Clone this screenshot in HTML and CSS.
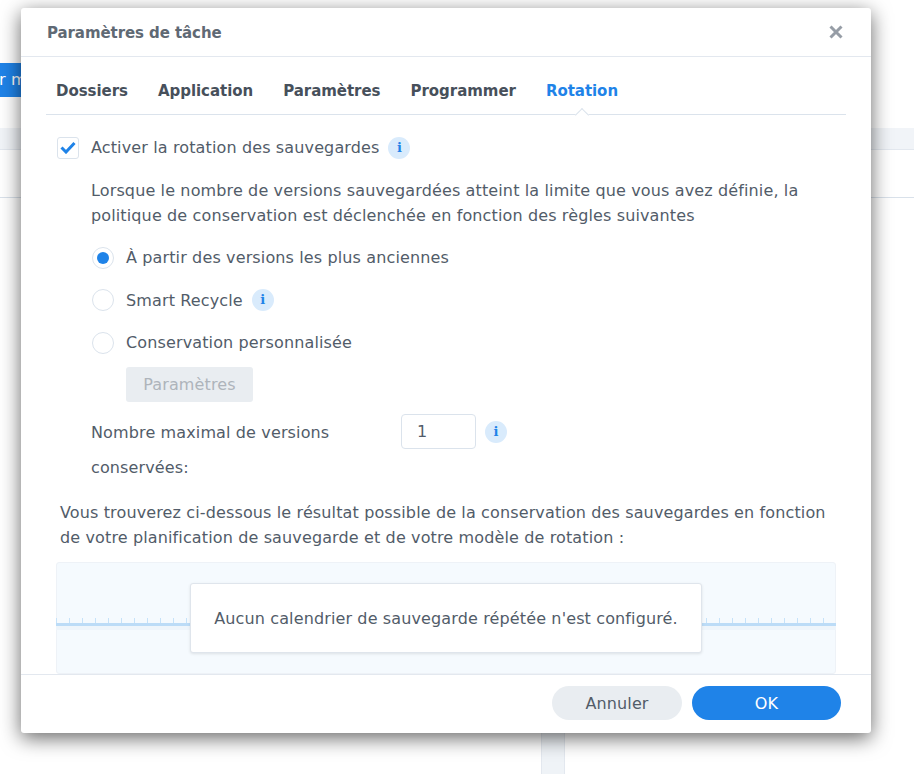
FILE: index.html
```html
<!DOCTYPE html>
<html lang="fr">
<head>
    <meta charset="UTF-8">
    <meta name="viewport" content="width=device-width, initial-scale=1.0">
    <title>Paramètres de tâche</title>
    <link rel="stylesheet" href="styles.css">
</head>
<body>
    <div class="backdrop">
        <div class="back-button">r m</div>
        <div class="back-strip"></div>
        <div class="back-row"></div>
        <div class="back-column"></div>
    </div>

    <div class="dialog">
        <div class="dialog-header">
            <span class="dialog-title">Paramètres de tâche</span>
            <svg class="close-icon" width="14" height="14" viewBox="0 0 14 14">
                <path d="M1.5 1.5 L12.5 12.5 M12.5 1.5 L1.5 12.5" stroke="#969da6" stroke-width="3" fill="none"/>
            </svg>
        </div>

        <div class="tabs">
            <span class="tab">Dossiers</span>
            <span class="tab">Application</span>
            <span class="tab">Paramètres</span>
            <span class="tab">Programmer</span>
            <span class="tab active">Rotation</span>
        </div>

        <div class="dialog-body">
            <div class="check-row">
                <span class="checkbox">
                    <svg width="16" height="13" viewBox="0 0 16 13">
                        <path d="M1.5 6.5 L6 11 L14.5 2" stroke="#1f83e8" stroke-width="3" fill="none"/>
                    </svg>
                </span>
                <span>Activer la rotation des sauvegardes</span>
                <span class="info">i</span>
            </div>

            <p class="intro">Lorsque le nombre de versions sauvegardées atteint la limite que vous avez définie, la politique de conservation est déclenchée en fonction des règles suivantes</p>

            <div class="radio-row">
                <span class="radio selected"></span>
                <span>À partir des versions les plus anciennes</span>
            </div>
            <div class="radio-row">
                <span class="radio"></span>
                <span>Smart Recycle</span>
                <span class="info">i</span>
            </div>
            <div class="radio-row">
                <span class="radio"></span>
                <span>Conservation personnalisée</span>
            </div>
            <div class="settings-btn">Paramètres</div>

            <div class="max-row">
                <div class="max-label">Nombre maximal de versions conservées:</div>
                <div class="number-input">1</div>
                <span class="info">i</span>
            </div>

            <p class="result-text">Vous trouverez ci-dessous le résultat possible de la conservation des sauvegardes en fonction de votre planification de sauvegarde et de votre modèle de rotation :</p>

            <div class="timeline">
                <div class="ticks"></div>
                <div class="axis"></div>
                <div class="timeline-msg">Aucun calendrier de sauvegarde répétée n'est configuré.</div>
            </div>
        </div>

        <div class="dialog-footer">
            <button class="btn btn-cancel">Annuler</button>
            <button class="btn btn-ok">OK</button>
        </div>
    </div>
</body>
</html>
```

FILE: styles.css
```css
html, body {
    margin: 0;
    height: 100%;
}
body {
    font-family: "DejaVu Sans", sans-serif;
    font-size: 16px;
    letter-spacing: 0.13px;
    color: #525c69;
    background-color: #fff;
    overflow: hidden;
}
.backdrop {
    height: 774px;
    padding-top: 63px;
    box-sizing: border-box;
    display: flex;
    flex-direction: column;
    overflow: hidden;
}
.back-button {
    width: 40px;
    height: 34px;
    line-height: 34px;
    background-color: #1f83e8;
    color: #fff;
    text-indent: -1px;
}
.back-strip {
    margin-top: 31px;
    height: 21px;
    background-color: #f1f4f8;
    border-bottom: 1px solid #e3e8ef;
}
.back-row {
    margin-top: 47px;
    border-top: 1px solid #d9e1ea;
    height: 500px;
    flex: none;
}
.back-column {
    width: 22px;
    height: 76px;
    flex: none;
    margin-left: 541px;
    background-color: #eff3f7;
    border: solid #e3e8ef;
    border-width: 0 1px;
}
.dialog {
    position: absolute;
    left: 21px;
    top: 8px;
    width: 850px;
    height: 725px;
    background-color: #fff;
    border-radius: 3px;
    box-shadow: 0 5px 20px rgba(0, 0, 0, 0.6);
    display: flex;
    flex-direction: column;
    overflow: hidden;
}
.dialog-header {
    height: 48px;
    flex: none;
    display: flex;
    justify-content: space-between;
    align-items: center;
    padding: 0 28px 0 26px;
    border-bottom: 1px solid #e3e8ef;
}
.dialog-title {
    font-size: 15px;
    letter-spacing: -0.08px;
    font-weight: 700;
    color: #5f6974;
    padding-top: 2px;
}
.tabs {
    flex: none;
    display: flex;
    gap: 30px;
    margin: 0 25px;
    padding: 0 10px;
    height: 57px;
    line-height: 69px;
    border-bottom: 1px solid #dbe3ec;
    position: relative;
}
.tab {
    font-size: 15px;
    letter-spacing: -0.04px;
    font-weight: 700;
    color: #47505b;
}
.tab.active {
    color: #1f83e8;
    position: relative;
}
.tab.active::after {
    content: "";
    position: absolute;
    left: 50%;
    bottom: -1px;
    width: 10px;
    height: 10px;
    margin-left: -5px;
    background-color: #fff;
    border: solid #dbe3ec;
    border-width: 1px 0 0 1px;
    transform: translateY(5px) rotate(45deg);
    box-sizing: border-box;
}
.dialog-body {
    flex: 1;
    overflow: hidden;
    padding: 20px 35px 0 36px;
    line-height: 25px;
}
.check-row {
    display: flex;
    align-items: center;
    height: 25px;
    margin-bottom: 18px;
}
.checkbox {
    width: 20px;
    height: 20px;
    border: 1px solid #dbe3ec;
    border-radius: 3px;
    margin-right: 12px;
    display: flex;
    align-items: center;
    justify-content: center;
}
.info {
    width: 22px;
    height: 22px;
    margin-left: 9px;
    border-radius: 50%;
    background-color: #d9ebfc;
    color: #1f83e8;
    font-family: "DejaVu Serif", serif;
    font-weight: 700;
    font-size: 13px;
    line-height: 22px;
    text-align: center;
    flex: none;
}
.intro {
    margin: 0 10px 17px 34px;
}
.radio-row {
    display: flex;
    align-items: center;
    height: 25px;
    margin: 0 0 17.5px 35px;
}
.radio {
    width: 20px;
    height: 20px;
    border: 1px solid #dbe3ec;
    border-radius: 50%;
    margin-right: 12px;
    position: relative;
    flex: none;
}
.radio.selected::after {
    content: "";
    position: absolute;
    left: 4px;
    top: 4px;
    width: 12px;
    height: 12px;
    border-radius: 50%;
    background-color: #1f83e8;
}
.settings-btn {
    width: 127px;
    height: 35px;
    line-height: 35px;
    margin: -5.5px 0 12px 69px;
    background-color: #e9edf1;
    border-radius: 3px;
    color: #aeb4bb;
    text-align: center;
}
.max-row {
    display: flex;
    align-items: flex-start;
    margin-left: 34px;
}
.max-label {
    width: 250px;
    margin-top: 1px;
    margin-right: 60px;
    line-height: 35px;
}
.number-input {
    width: 58px;
    height: 33px;
    line-height: 33px;
    padding-left: 15px;
    border: 1px solid #dbe3ec;
    border-radius: 4px;
}
.max-row .info {
    margin-top: 7px;
}
.result-text {
    margin: 15px 0 12px 3px;
}
.timeline {
    position: relative;
    box-sizing: border-box;
    height: 112px;
    width: 780px;
    margin-left: -1px;
    background-color: #f5fafe;
    border: 1px solid #eef2f7;
    border-radius: 3px;
}
.ticks {
    position: absolute;
    left: -1px;
    right: -1px;
    top: 55px;
    height: 5px;
    background-image: repeating-linear-gradient(to right, #c6e2f9 0, #c6e2f9 1px, transparent 1px, transparent 13px);
}
.axis {
    position: absolute;
    left: -1px;
    right: -1px;
    top: 60px;
    height: 3px;
    background-color: #bcdcf7;
    border-bottom: 4px solid #eef5fb;
}
.timeline-msg {
    position: absolute;
    left: 133px;
    top: 20px;
    width: 512px;
    height: 70px;
    line-height: 70px;
    box-sizing: border-box;
    text-align: center;
    background-color: #fff;
    border: 1px solid #dfe5ec;
    border-radius: 3px;
    box-shadow: 0 1px 3px rgba(0, 0, 0, 0.1);
}
.dialog-footer {
    flex: none;
    box-sizing: border-box;
    height: 59px;
    border-top: 1px solid #e3e8ef;
    display: flex;
    justify-content: flex-end;
    align-items: flex-start;
    gap: 10px;
    padding: 11px 30px 0 0;
}
.btn {
    height: 34px;
    border: none;
    border-radius: 17px;
    font-family: inherit;
    font-size: 16px;
    letter-spacing: inherit;
    padding: 0;
}
.btn-cancel {
    width: 130px;
    background-color: #e9edf1;
    color: #525c69;
}
.btn-ok {
    width: 149px;
    background-color: #1f83e8;
    color: #fff;
}
```
